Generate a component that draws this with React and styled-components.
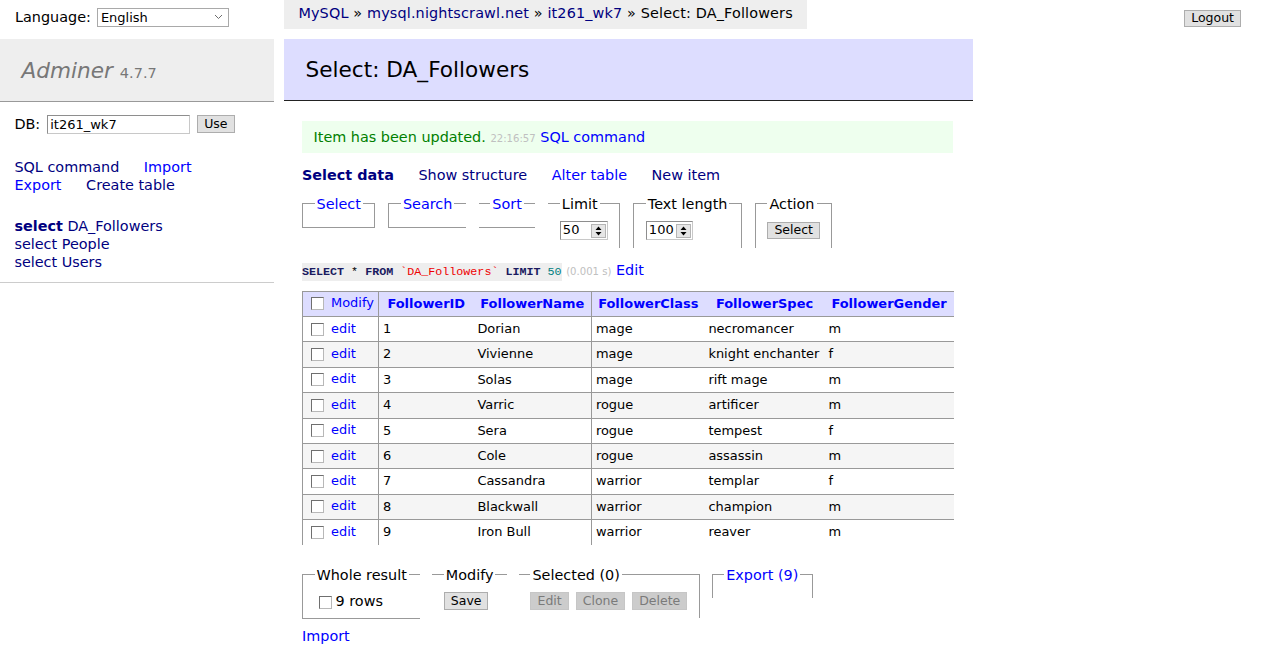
import React from 'react';
import styled, { createGlobalStyle, css } from 'styled-components';

const GlobalStyle = createGlobalStyle`
  *, *::before, *::after { box-sizing: border-box; }
  html, body { margin: 0; background: #fff; }
  body {
    color: #000;
    font: 14.4px/1.25 "DejaVu Sans", Verdana, sans-serif;
  }
`;

const A = styled.a`
  color: ${p => (p.$visited ? 'navy' : 'blue')};
  font-weight: ${p => (p.$active ? 'bold' : 'inherit')};
  text-decoration: none;
  cursor: pointer;
  white-space: nowrap;
`;

const SpacedA = styled(A)`
  margin-right: 20px;
`;

const Button = styled.button`
  font: 12.5px/1 "DejaVu Sans", Verdana, sans-serif;
  color: #000;
  background: #e1e1e1;
  border: 1px solid #adadad;
  border-radius: 0;
  padding: 0 6px;
  height: ${p => p.$h || 18}px;
  ${p => p.disabled && css`
    background: #cccccc;
    color: #7a7a7a;
    border-color: #c6c6c6;
  `}
`;

const Check = styled.input.attrs({ type: 'checkbox' })`
  appearance: none;
  width: 13px;
  height: 13px;
  margin: 3px 3px 3px 4px;
  border: 1px solid;
  border-color: #6f6f6f #b8b8b8 #b8b8b8 #6f6f6f;
  background: #fff;
  vertical-align: middle;
`;

/* top bar */
const TopBar = styled.header`
  display: flex;
  align-items: flex-start;
  height: 39px;
`;

const Lang = styled.div`
  width: 284px;
  flex: none;
  display: flex;
  align-items: center;
  gap: 6px;
  padding: 4px 15px 0;
  line-height: 26px;
`;

const SelectBox = styled.div`
  display: flex;
  align-items: center;
  justify-content: space-between;
  width: 132px;
  height: 19px;
  border: 1px solid #a9a9a9;
  padding: 0 5px 0 3px;
  font-size: 13px;
  line-height: 17px;
`;

const Breadcrumb = styled.div`
  height: 28.8px;
  line-height: 26px;
  padding: 0 14.4px;
  background: #eee;
  white-space: nowrap;
  letter-spacing: 0.15px;
`;

const Logout = styled(Button)`
  margin: 10px 22px 0 auto;
`;

/* layout */
const Body = styled.div`
  display: flex;
  align-items: flex-start;
`;

const Menu = styled.nav`
  width: 274px;
  flex: none;
`;

const Brand = styled.h1`
  margin: 0;
  padding: 17.5px 21.6px;
  font-size: 21.6px;
  line-height: 27px;
  font-weight: normal;
  color: #777;
  background: #eee;
  border-bottom: 1px solid #999;
`;

const BrandName = styled.a`
  color: #777;
  font-style: italic;
  text-decoration: none;
`;

const Version = styled.span`
  font-size: 14.5px;
  line-height: 1;
  color: #777;
`;

const DbForm = styled.div`
  display: flex;
  align-items: center;
  height: 21px;
  box-sizing: content-box;
  padding: 11.5px 14.4px;
`;

const DbLabel = styled.span`
  margin-right: 7px;
`;

const TextInput = styled.input`
  width: 143px;
  height: 19px;
  margin: 0 7px 0 0;
  padding: 0 2px;
  border: 1px solid;
  border-color: #8e8e8e #c8c8c8 #c8c8c8 #8e8e8e;
  font: 13px "DejaVu Sans", Verdana, sans-serif;
`;

const MenuLinks = styled.p`
  margin: 0;
  padding: 11.5px 14.4px;
  line-height: 18px;
`;

const Tables = styled.ul`
  margin: 0;
  padding: 11.5px 14.4px;
  list-style: none;
  border-bottom: 1px solid #ccc;
  line-height: 18px;
`;

const Content = styled.main`
  width: 689px;
  margin-left: 10px;
`;

const Title = styled.h2`
  margin: 0 0 20px;
  padding: 17px 21.6px;
  font-size: 21.6px;
  line-height: 27px;
  font-weight: normal;
  background: #ddf;
  border-bottom: 1px solid #222;
`;

const Inner = styled.div`
  padding: 0 20px 20px 18px;
`;

const Message = styled.div`
  padding: 7.2px 11.5px;
  color: green;
  background: #efe;
  line-height: 18px;
`;

const Time = styled.span`
  color: silver;
  font-size: 10.1px;
  line-height: 1;
`;

const Links = styled.p`
  margin: ${p => p.$top ?? 13}px 0 0;
  line-height: 18px;
`;

const FieldRow = styled.div`
  display: flex;
  align-items: flex-start;
  gap: ${p => p.$gap || 13}px;
  margin-top: ${p => p.$top ?? 10.5}px;
`;

const Fieldset = styled.fieldset`
  margin: 0;
  min-width: 0;
  padding: 7.2px 11.5px;
  border-width: 1px;
  border-color: #999;
  border-style: ${p => ['t', 'r', 'b', 'l'].map(s => (p.$sides.includes(s) ? 'solid' : 'none')).join(' ')};
`;

const Legend = styled.legend`
  padding: 0 2px;
  line-height: 18px;
`;

const Field = styled.div`
  display: flex;
  align-items: center;
  height: ${p => p.$h || 21}px;
`;

const NumberBox = styled.div`
  display: flex;
  align-items: center;
  justify-content: space-between;
  width: ${p => p.$w}px;
  height: 19px;
  padding: 0 1px 0 2px;
  border: 1px solid;
  border-color: #8e8e8e #c8c8c8 #c8c8c8 #8e8e8e;
  font-size: 13px;
`;

const Spinner = styled.span`
  display: flex;
  width: 15px;
  height: 14px;
  background: #e6e6e6;
  border: 1px solid #b5b5b5;
  align-items: center;
  justify-content: center;
`;

const SqlLine = styled.p`
  margin: 12.5px 0 0;
  height: 18px;
  line-height: 18px;
`;

const Code = styled.code`
  font: 11.7px/1 "Liberation Mono", "Courier New", monospace;
  background: #eee;
  padding: 2px 0;
`;

const Kw = styled.span`
  color: #1a1a60;
  font-weight: bold;
`;

const Str = styled.span`
  color: #e00;
`;

const Num = styled.span`
  color: #007f7f;
`;

const Table = styled.table`
  margin-top: 12px;
  width: 651px;
  table-layout: fixed;
  border-collapse: collapse;
  font-size: 12.96px;
  line-height: 1.25;
`;

const Row = styled.tr`
  height: 25.4px;
  background: ${p => (p.$odd ? '#f5f5f5' : '#fff')};
`;

const HeadRow = styled.tr`
  height: 25px;
  background: #ddf;
`;

const cellBorders = css`
  border-top: 1px solid #999;
  border-bottom: ${p => (p.$last ? 'none' : '1px solid #999')};
  border-left: ${p => (p.$first ? '1px solid #999' : 'none')};
  border-right: ${p => (p.$divider ? '1px solid #999' : 'none')};
`;

const Th = styled.th`
  ${cellBorders}
  padding: 2.6px 4px;
  text-align: center;
  white-space: nowrap;
  font-weight: bold;
`;

const Td = styled.td`
  ${cellBorders}
  padding: 2.6px 3.9px;
  text-align: left;
  white-space: nowrap;
  overflow: hidden;
`;

const Footer = styled.div`
  padding-top: 21px;
`;

const BtnRow = styled.div`
  display: flex;
  gap: ${p => p.$gap || 7}px;
`;

const CheckLabel = styled.label`
  display: flex;
  align-items: center;
  height: 20px;
  & > input { margin: 3px 4px 0 4px; }
`;

const Chevron = () => (
  <svg width="9" height="6" viewBox="0 0 9 6">
    <path d="M1 1l3.5 3.5L8 1" fill="none" stroke="#6d6d6d" strokeWidth="1" />
  </svg>
);

const SpinIcon = () => (
  <Spinner>
    <svg width="7" height="10" viewBox="0 0 7 10">
      <path d="M3.5 0.5L6.5 4H0.5z M0.5 6h6l-3 3.5z" fill="#000" />
    </svg>
  </Spinner>
);

const followers = [
  [1, 'Dorian', 'mage', 'necromancer', 'm'],
  [2, 'Vivienne', 'mage', 'knight enchanter', 'f'],
  [3, 'Solas', 'mage', 'rift mage', 'm'],
  [4, 'Varric', 'rogue', 'artificer', 'm'],
  [5, 'Sera', 'rogue', 'tempest', 'f'],
  [6, 'Cole', 'rogue', 'assassin', 'm'],
  [7, 'Cassandra', 'warrior', 'templar', 'f'],
  [8, 'Blackwall', 'warrior', 'champion', 'm'],
  [9, 'Iron Bull', 'warrior', 'reaver', 'm'],
];

const columns = ['FollowerID', 'FollowerName', 'FollowerClass', 'FollowerSpec', 'FollowerGender'];
const widths = [76, 95, 118, 113, 120, 129];

const App = () => (
  <>
    <GlobalStyle />
    <TopBar>
      <Lang>
        Language:
        <SelectBox>English<Chevron /></SelectBox>
      </Lang>
      <Breadcrumb>
        <A $visited>MySQL</A> » <A $visited>mysql.nightscrawl.net</A> » <A $visited>it261_wk7</A> » Select: DA_Followers
      </Breadcrumb>
      <Logout $h={17}>Logout</Logout>
    </TopBar>

    <Body>
      <Menu>
        <Brand>
          <BrandName>Adminer</BrandName> <Version>4.7.7</Version>
        </Brand>
        <DbForm>
          <DbLabel>DB:</DbLabel>
          <TextInput defaultValue="it261_wk7" />
          <Button>Use</Button>
        </DbForm>
        <MenuLinks>
          <SpacedA $visited>SQL command</SpacedA>{' '}
          <SpacedA>Import</SpacedA>{' '}
          <SpacedA>Export</SpacedA>{' '}
          <SpacedA $visited>Create table</SpacedA>
        </MenuLinks>
        <Tables>
          <li><A $visited $active>select</A> <A $visited>DA_Followers</A></li>
          <li><A $visited>select</A> <A $visited>People</A></li>
          <li><A $visited>select</A> <A $visited>Users</A></li>
        </Tables>
      </Menu>

      <Content>
        <Title>Select: DA_Followers</Title>
        <Inner>
          <Message>
            Item has been updated. <Time>22:16:57</Time> <A>SQL command</A>
          </Message>

          <Links>
            <SpacedA $visited $active>Select data</SpacedA>{' '}
            <SpacedA $visited>Show structure</SpacedA>{' '}
            <SpacedA>Alter table</SpacedA>{' '}
            <SpacedA $visited>New item</SpacedA>
          </Links>

          <FieldRow>
            <Fieldset $sides="trbl"><Legend><A>Select</A></Legend></Fieldset>
            <Fieldset $sides="tbl"><Legend><A>Search</A></Legend></Fieldset>
            <Fieldset $sides="tb"><Legend><A>Sort</A></Legend></Fieldset>
            <Fieldset $sides="tr">
              <Legend>Limit</Legend>
              <Field><NumberBox $w={48}>50<SpinIcon /></NumberBox></Field>
            </Fieldset>
            <Fieldset $sides="trl">
              <Legend>Text length</Legend>
              <Field><NumberBox $w={47}>100<SpinIcon /></NumberBox></Field>
            </Fieldset>
            <Fieldset $sides="trl">
              <Legend>Action</Legend>
              <Field><Button $h={17}>Select</Button></Field>
            </Fieldset>
          </FieldRow>

          <SqlLine>
            <Code>
              <Kw>SELECT</Kw> * <Kw>FROM</Kw> <Str>`DA_Followers`</Str> <Kw>LIMIT</Kw> <Num>50</Num>
            </Code>{' '}
            <Time>(0.001 s)</Time> <A>Edit</A>
          </SqlLine>

          <Table>
            <colgroup>
              {widths.map((w, i) => <col key={i} style={{ width: w }} />)}
            </colgroup>
            <thead>
              <HeadRow>
                <Td $first $divider><Check /> <A>Modify</A></Td>
                {columns.map((c, i) => (
                  <Th key={c} $divider={i === 1}><A>{c}</A></Th>
                ))}
              </HeadRow>
            </thead>
            <tbody>
              {followers.map((f, r) => {
                const last = r === followers.length - 1;
                return (
                  <Row key={f[0]} $odd={r % 2 === 1}>
                    <Td $first $divider $last={last}><Check /> <A>edit</A></Td>
                    {f.map((v, i) => (
                      <Td key={i} $divider={i === 1} $last={last}>{v}</Td>
                    ))}
                  </Row>
                );
              })}
            </tbody>
          </Table>

          <Footer>
            <FieldRow $top={0} $gap={12}>
              <Fieldset $sides="tbl">
                <Legend>Whole result</Legend>
                <CheckLabel><Check />9 rows</CheckLabel>
              </Fieldset>
              <Fieldset $sides="t">
                <Legend>Modify</Legend>
                <Field $h={20}><Button>Save</Button></Field>
              </Fieldset>
              <Fieldset $sides="tr">
                <Legend>Selected (0)</Legend>
                <Field $h={20}>
                  <BtnRow>
                    <Button disabled>Edit</Button>
                    <Button disabled>Clone</Button>
                    <Button disabled>Delete</Button>
                  </BtnRow>
                </Field>
              </Fieldset>
              <Fieldset $sides="trl">
                <Legend><A>Export (9)</A></Legend>
              </Fieldset>
            </FieldRow>
            <Links $top={8}><A>Import</A></Links>
          </Footer>
        </Inner>
      </Content>
    </Body>
  </>
);

export default App;
